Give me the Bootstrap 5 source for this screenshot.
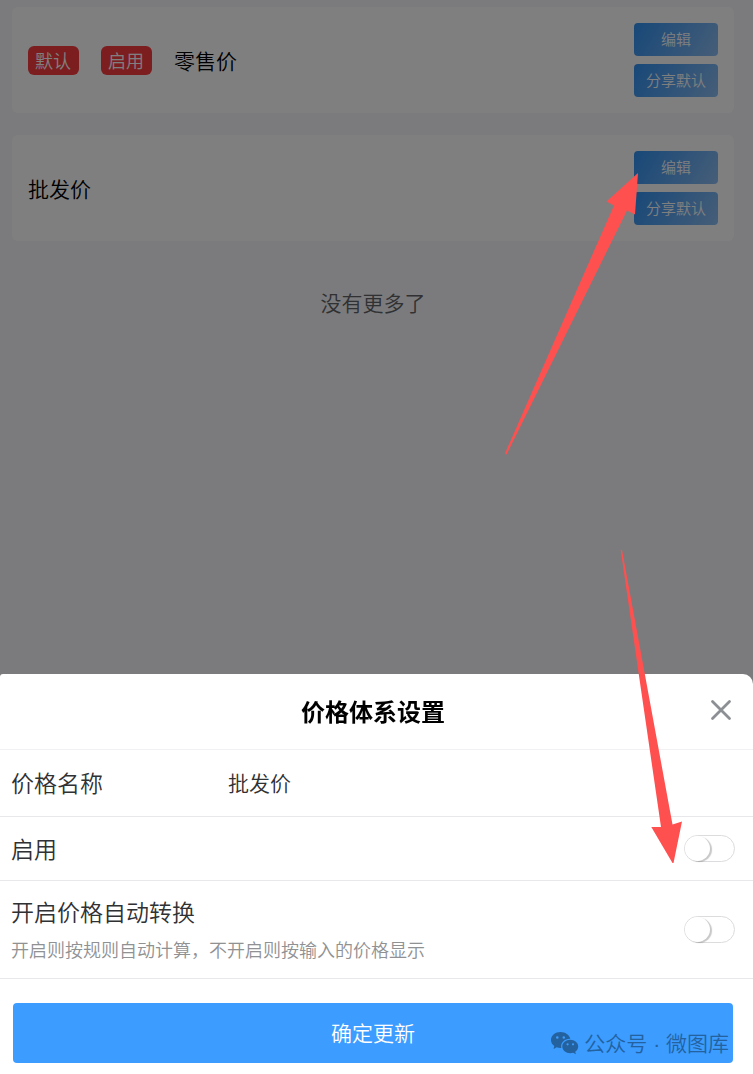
<!DOCTYPE html>
<html lang="zh-CN">
<head>
<meta charset="utf-8">
<meta name="viewport" content="width=device-width, initial-scale=1">
<title>价格体系设置</title>
<link href="https://cdn.jsdelivr.net/npm/bootstrap@5.3.0/dist/css/bootstrap.min.css" rel="stylesheet">
<style>
  body { background: #f7f7fa; color: #000; font-family: "Noto Sans CJK SC", sans-serif; font-size: 21px; font-weight: 350; line-height: 28px; }
  .price-list { padding: 7px 19px 0 12px; gap: 22px; }
  .price-card { border: 0; border-radius: 6px; padding: 16px; background: #fff; }
  .tags { gap: 22px; }
  .tag { font-size: 18px; line-height: 29px; padding: 0 7px; border-radius: 6px; background: #f83c40; color: #fff; width: 51px; }
  .mini-btn { width: 84px; height: 33px; padding: 0 0 2px; border: 0; border-radius: 4px; font-size: 15px; font-weight: 350; line-height: 31px; color: #fff; background: linear-gradient(120deg, #3090f0, #8cbcf0); }
  .mini-btn:hover { color: #fff; }
  .no-more { color: #606266; margin: 25px 0; }
  .mask { background: rgba(0, 0, 0, .5); z-index: 10; }
  .sheet { z-index: 20; background: #fff; border-radius: 3px 10px 0 0; }
  .sheet-head { padding: 19px 19px 21px 12px; border-bottom: 1px solid #f1f1f3; }
  .sheet-head h1 { font-size: 24px; line-height: 35px; }
  .close-btn { right: 18px; top: 22px; width: 28px; height: 28px; line-height: 0; }
  .setting { padding: 0 18px 0 11px; border-bottom: 1px solid #e8e8ea; color: #303133; font-size: 23px; line-height: 32px; }
  .setting-name { padding-top: 16px; padding-bottom: 18px; }
  .setting-name label { width: 217px; }
  .setting-name input { font-size: 21px; font-weight: 350; line-height: 32px; padding: 0; border: 0; color: #303133; }
  .setting-on { padding-top: 15px; padding-bottom: 16px; }
  .setting-auto { padding-top: 14px; padding-bottom: 14px; }
  .hint { font-size: 18px; line-height: 29px; padding-top: 8px; color: #909193; }
  .toggle { appearance: none; width: 51px; height: 27px; margin: 0; flex: none; border: 1px solid #dcdcde; border-radius: 14px; background: #fff; }
  .toggle::before { content: ""; display: block; width: 25px; height: 25px; border-radius: 50%; background: #fff; box-shadow: 2px 1px 1px rgba(0, 0, 0, .22); }
  .toggle:checked { background: #3c9cff; }
  .toggle:checked::before { margin-left: 24px; }
  .sheet-foot { padding: 24px 20px 11px 13px; }
  .submit-btn { height: 60px; border: 0; border-radius: 4px; background: #3c9cff; color: #fff; font-size: 21px; font-weight: 350; }
  .watermark { right: 24px; bottom: 16px; gap: 5px; line-height: 28px; color: #23629f; pointer-events: none; }
  .dot { font-family: "Liberation Sans", sans-serif; }
  .pointer { z-index: 30; pointer-events: none; fill: #ff5050; }
  .pointer-edit { right: 113px; top: 172px; }
  .pointer-toggle { right: 70px; bottom: 210px; }
</style>
</head>
<body>
<main class="price-list d-flex flex-column">
  <article class="price-card card flex-row align-items-center justify-content-between">
    <div class="tags d-flex align-items-center">
      <span class="tag text-nowrap">默认</span>
      <span class="tag text-nowrap">启用</span>
      <span>零售价</span>
    </div>
    <div class="d-flex flex-column gap-2">
      <button type="button" class="btn mini-btn">编辑</button>
      <button type="button" class="btn mini-btn">分享默认</button>
    </div>
  </article>
  <article class="price-card card flex-row align-items-center justify-content-between">
    <span>批发价</span>
    <div class="d-flex flex-column gap-2">
      <button type="button" class="btn mini-btn">编辑</button>
      <button type="button" class="btn mini-btn">分享默认</button>
    </div>
  </article>
  <p class="no-more text-center">没有更多了</p>
</main>

<div class="mask position-fixed top-0 start-0 w-100 h-100"></div>

<section class="sheet position-fixed bottom-0 start-0 w-100" role="dialog" aria-labelledby="sheetTitle">
  <header class="sheet-head position-relative text-center">
    <h1 id="sheetTitle" class="fw-bold m-0">价格体系设置</h1>
    <button type="button" class="close-btn btn p-0 border-0 position-absolute" aria-label="关闭">
      <svg width="28" height="28" viewBox="0 0 28 28" fill="none" stroke="#8c8f93" stroke-width="2.8" stroke-linecap="round"><path d="M5.500 5.500 22.500 22.500M22.500 5.500 5.500 22.500"/></svg>
    </button>
  </header>
  <form>
    <div class="setting setting-name d-flex align-items-center">
      <label for="priceName" class="flex-shrink-0">价格名称</label>
      <input id="priceName" type="text" class="form-control-plaintext" value="批发价">
    </div>
    <div class="setting setting-on d-flex align-items-center justify-content-between">
      <label for="enabled">启用</label>
      <input id="enabled" type="checkbox" role="switch" class="toggle">
    </div>
    <div class="setting setting-auto d-flex align-items-center justify-content-between">
      <div>
        <label for="autoConvert" class="d-block">开启价格自动转换</label>
        <div class="hint">开启则按规则自动计算，不开启则按输入的价格显示</div>
      </div>
      <input id="autoConvert" type="checkbox" role="switch" class="toggle">
    </div>
    <div class="sheet-foot position-relative">
      <button type="button" class="btn submit-btn w-100">确定更新</button>
      <div class="watermark d-flex align-items-center position-absolute">
        <svg width="28" height="24" viewBox="0 0 28 24">
          <path fill="#23629f" fill-rule="evenodd" d="M9.500 1C4.300 1 0 4.500 0 9c0 2.500 1.300 4.600 3.300 6L2.500 18l3.200-1.700c1.200.4 2.500.6 3.800.6h.8C9.200 11.500 13.600 7.500 19.300 7.700 18.200 3.800 14.200 1 9.500 1ZM6.300 5.200a1.300 1.300 0 1 1 0 2.600 1.300 1.300 0 0 1 0-2.600ZM12.800 5.200a1.300 1.300 0 1 1 0 2.600 1.300 1.300 0 0 1 0-2.600Z"/>
          <path fill="#23629f" fill-rule="evenodd" d="M19.300 8.800c-4.500 0-8 3-8 6.700s3.500 6.700 8 6.700c1 0 2-.2 2.900-.5l2.700 1.500-.7-2.500c1.800-1.200 3-3.100 3-5.200 0-3.700-3.500-6.700-7.900-6.700ZM16.600 12.200a1.100 1.100 0 1 1 0 2.200 1.100 1.100 0 0 1 0-2.200ZM22 12.200a1.100 1.100 0 1 1 0 2.200 1.100 1.100 0 0 1 0-2.200Z"/>
        </svg>
        <span class="text-nowrap">公众号<span class="dot"> · </span>微图库</span>
      </div>
    </div>
  </form>
</section>

<svg class="pointer pointer-edit position-fixed" width="135" height="284" viewBox="0 0 135 284" aria-hidden="true"><path d="M133 1 101.500 29.500 109 33.500 0 281.500 1.500 282.500 122 38.500 130 42.500Z"/></svg>
<svg class="pointer pointer-toggle position-fixed" width="63" height="315" viewBox="0 0 63 315" aria-hidden="true"><path d="M.7 1 2 1 52.500 275.500 62 272.500 53.500 314 52.500 314 31.300 278 41 278Z"/></svg>
<script src="https://cdn.jsdelivr.net/npm/bootstrap@5.3.0/dist/js/bootstrap.bundle.min.js"></script>
</body>
</html>
